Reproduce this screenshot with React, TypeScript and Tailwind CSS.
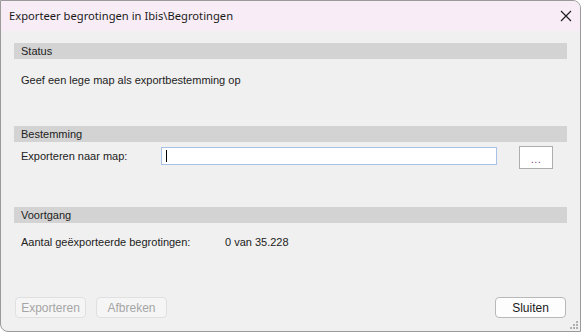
import React from "react";

const body = { fontFamily: '"Liberation Sans", Arial, sans-serif' };
const title = { fontFamily: '"Segoe UI", "Noto Sans", "Open Sans", sans-serif' };

function SectionBar({ label }: { label: string }) {
  return (
    <div className="mx-[13px] h-[16px] bg-[#d3d3d3] pl-[7px] flex items-center text-[11px] leading-[13px] text-[#222]">
      {label}
    </div>
  );
}

export default function App() {
  return (
    <div className="w-[581px] h-[332px] relative overflow-hidden" style={body}>
      <div className="w-full h-full border border-[#9a9a9a] rounded-tr-[8px] rounded-bl-[8px] overflow-hidden flex flex-col bg-[#f0f0f0]">
        {/* title bar */}
        <div className="h-[30px] shrink-0 bg-[#f8ecf7] flex items-center justify-between pl-[8px] pr-[7px]">
          <span className="text-[11.2px] text-[#1a1a1a]" style={title}>
            Exporteer begrotingen in Ibis\Begrotingen
          </span>
          <svg width="12" height="12" viewBox="0 0 12 12" className="mr-[1px]">
            <path d="M1 1 L11 11 M11 1 L1 11" stroke="#1a1a1a" strokeWidth="1.1" fill="none" />
          </svg>
        </div>

        {/* body */}
        <div className="flex-1 flex flex-col pt-[12px]">
          <SectionBar label="Status" />
          <div className="h-[67px] pl-[20px] pt-[15px] text-[11px] leading-[13px] text-[#222]">
            Geef een lege map als exportbestemming op
          </div>

          <SectionBar label="Bestemming" />
          <div className="h-[65px] pt-[4px] pl-[20px] flex items-start">
            <div className="w-[140px] mt-[4px] text-[11px] leading-[13px] text-[#222]">
              Exporteren naar map:
            </div>
            <div className="mt-[1px] w-[336px] h-[18px] bg-white border border-[#a8c1e6] flex items-center pl-[4px]">
              <span className="w-[1px] h-[12px] bg-black" />
            </div>
            <div className="ml-[22px] w-[34px] h-[23px] bg-white border border-[#adadad] flex items-end justify-center pb-[5px]">
              <span className="text-[11px] leading-[8px] text-[#7a3a8a] tracking-[0.5px]">...</span>
            </div>
          </div>

          <SectionBar label="Voortgang" />
          <div className="pl-[20px] pt-[13px] flex text-[11px] leading-[13px] text-[#222]">
            <span className="w-[204px]">Aantal geëxporteerde begrotingen:</span>
            <span>0 van 35.228</span>
          </div>

          {/* footer */}
          <div className="mt-auto mb-[13px] h-[21px] flex items-center px-[14px]">
            <div className="w-[71px] h-[21px] rounded-[4px] bg-[#f5f5f5] border border-[#e0e0e0] flex items-center justify-center text-[12px] text-[#a5a5a5]">
              Exporteren
            </div>
            <div className="ml-[10px] w-[71px] h-[21px] rounded-[4px] bg-[#f5f5f5] border border-[#e0e0e0] flex items-center justify-center text-[12px] text-[#a5a5a5]">
              Afbreken
            </div>
            <div className="ml-auto w-[71px] h-[21px] rounded-[4px] bg-[#fdfdfd] border border-[#b8b8b8] flex items-center justify-center text-[12px] text-[#1a1a1a]">
              Sluiten
            </div>
          </div>
        </div>
      </div>
      {/* resize grip */}
      <svg width="8" height="8" viewBox="0 0 8 8" className="absolute right-[3px] bottom-[3px]">
        <rect x="6" y="0" width="2" height="2" fill="#b0b0b0" />
        <rect x="3" y="3" width="2" height="2" fill="#b0b0b0" />
        <rect x="6" y="3" width="2" height="2" fill="#b0b0b0" />
        <rect x="0" y="6" width="2" height="2" fill="#b0b0b0" />
        <rect x="3" y="6" width="2" height="2" fill="#b0b0b0" />
        <rect x="6" y="6" width="2" height="2" fill="#b0b0b0" />
      </svg>
    </div>
  );
}
